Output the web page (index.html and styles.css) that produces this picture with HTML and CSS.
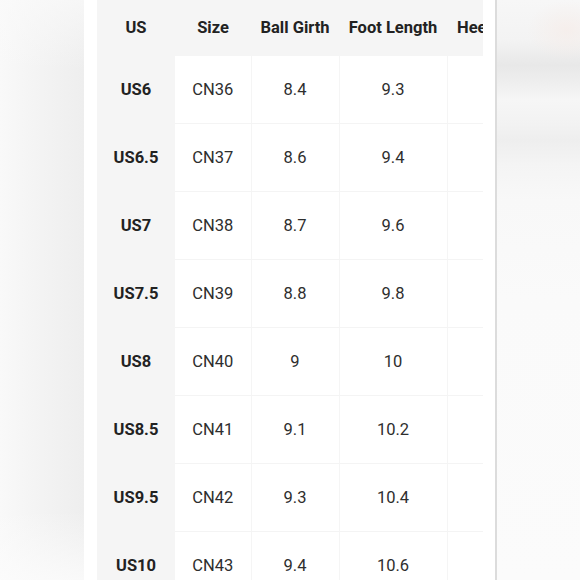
FILE: index.html
```html
<!DOCTYPE html>
<html>
<head>
<meta charset="utf-8">
<link rel="stylesheet" href="styles.css">
</head>
<body>
<div class="page">
  <div class="side side-left"></div>
  <div class="sheet">
    <div class="clip">
      <table class="chart">
        <colgroup>
          <col class="c-us"><col class="c-size"><col class="c-ball"><col class="c-foot"><col class="c-heel">
        </colgroup>
        <thead>
          <tr><th>US</th><th>Size</th><th>Ball Girth</th><th>Foot Length</th><th class="heel">Heel Width</th></tr>
        </thead>
        <tbody>
          <tr><th>US6</th><td>CN36</td><td>8.4</td><td>9.3</td><td></td></tr>
          <tr><th>US6.5</th><td>CN37</td><td>8.6</td><td>9.4</td><td></td></tr>
          <tr><th>US7</th><td>CN38</td><td>8.7</td><td>9.6</td><td></td></tr>
          <tr><th>US7.5</th><td>CN39</td><td>8.8</td><td>9.8</td><td></td></tr>
          <tr><th>US8</th><td>CN40</td><td>9</td><td>10</td><td></td></tr>
          <tr><th>US8.5</th><td>CN41</td><td>9.1</td><td>10.2</td><td></td></tr>
          <tr><th>US9.5</th><td>CN42</td><td>9.3</td><td>10.4</td><td></td></tr>
          <tr><th>US10</th><td>CN43</td><td>9.4</td><td>10.6</td><td></td></tr>
        </tbody>
      </table>
    </div>
  </div>
  <div class="side side-right"></div>
</div>
</body>
</html>
```
FILE: styles.css
```css
html, body {
  margin: 0;
  padding: 0;
  background: #ffffff;
}
.page {
  display: flex;
  width: 580px;
  height: 580px;
  overflow: hidden;
  font-family: Roboto, "Liberation Sans", sans-serif;
}
.side-left {
  width: 84px;
  flex: none;
  background:
    linear-gradient(180deg, rgba(250,250,250,0.7) 0%, rgba(250,250,250,0) 12%, rgba(250,250,250,0) 88%, rgba(252,252,252,0.8) 100%),
    linear-gradient(90deg, #f9f9f9 0%, #f3f3f3 50%, #eeeeee 100%);
}
.sheet {
  width: 398px;
  flex: none;
  background: #ffffff;
  padding-left: 13px;
  border-right: 2px solid #dcdcdc;
}
.clip {
  width: 386px;
  height: 580px;
  overflow: hidden;
}
.chart {
  border-collapse: collapse;
  table-layout: fixed;
  width: 506px;
  color: #2e2e2e;
  font-size: 16.5px;
}
.c-us { width: 78px; }
.c-size { width: 76px; }
.c-ball { width: 88px; }
.c-foot { width: 108px; }
.c-heel { width: 156px; }
.chart thead th {
  height: 54px;
  padding: 0 0 2px 0;
  background: #f5f5f5;
  font-weight: 700;
  color: #222222;
  text-align: center;
  white-space: nowrap;
}
.chart thead th.heel {
  text-align: left;
  padding-left: 10px;
}
.chart tbody th,
.chart tbody td {
  height: 67px;
  padding: 0;
  text-align: center;
  border-bottom: 1px solid #f4f4f4;
}
.chart tbody th {
  background: #f5f5f5;
  font-weight: 700;
  color: #222222;
  border-bottom-color: #f5f5f5;
}
.chart tbody td {
  font-weight: 400;
}
.chart tbody td:nth-child(3),
.chart tbody td:nth-child(4),
.chart tbody td:nth-child(5) {
  border-left: 1px solid #f5f5f5;
}
.side-right {
  flex: 1;
  background:
    radial-gradient(ellipse 40px 30px at 70px 30px, rgba(246,236,232,0.7), rgba(246,236,232,0)),
    linear-gradient(180deg, #f7f7f7 0px, #f3f3f3 40px, #e8e8e8 65px, #ededed 80px, #f6f6f6 100px, #f2f2f2 125px, #eeeeee 140px, #f4f4f4 165px, #f8f8f8 200px, #fafafa 300px, #fbfbfb 580px);
}
```
